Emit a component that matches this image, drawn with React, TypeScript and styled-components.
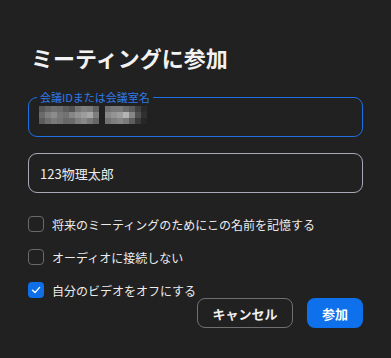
import * as React from 'react'
import styled, { createGlobalStyle } from 'styled-components'

const GlobalStyle = createGlobalStyle`
  html, body {
    margin: 0;
    padding: 0;
    background: #212121;
  }
  body {
    font-family: "Noto Sans CJK JP", "Noto Sans", sans-serif;
    -webkit-font-smoothing: antialiased;
  }
`

// blurred meeting id — gray levels per mosaic block
const mosaic: number[][] = [
  [0x58, 0x66, 0x70, 0x6c, 0x5e, 0x54, 0x74, 0x80, 0x7c, 0x62, 0, 0x70, 0x78, 0x7a, 0x6a, 0x5c, 0x40, 0x2a],
  [0x6a, 0x80, 0x8c, 0x78, 0x72, 0x86, 0x92, 0x9c, 0xa8, 0x7e, 0, 0x88, 0x94, 0x9e, 0xb4, 0x86, 0x50, 0x30],
  [0x5c, 0x6e, 0x7a, 0x74, 0x68, 0x6a, 0x7e, 0x88, 0x78, 0x66, 0, 0x72, 0x7e, 0x86, 0x7a, 0x5e, 0x3a, 0x26],
]

function Mosaic() {
  return (
    <svg width="108" height="18" viewBox="0 0 108 18">
      {mosaic.map((row, r) =>
        row.map((v, c) =>
          v ? (
            <rect
              key={`${r}-${c}`}
              x={c * 6}
              y={r * 6}
              width="6"
              height="6"
              fill={`rgb(${v},${v},${v})`}
            />
          ) : null
        )
      )}
    </svg>
  )
}

function Check({ checked, label }: { checked?: boolean; label: string }) {
  return (
    <CheckRow>
      <Box $checked={checked}>
        {checked && (
          <svg width="10" height="10" viewBox="0 0 10 10">
            <path d="M1.5 5.2 L4 7.6 L8.6 2.4" fill="none" stroke="#fff" strokeWidth="1.4" strokeLinecap="round" strokeLinejoin="round" />
          </svg>
        )}
      </Box>
      <CheckLabel>{label}</CheckLabel>
    </CheckRow>
  )
}

export default function App() {
  return (
    <>
      <GlobalStyle />
      <Dialog>
        <Title>ミーティングに参加</Title>
        <IdField>
          <FloatLabel>会議IDまたは会議室名</FloatLabel>
          <Mosaic />
        </IdField>
        <NameField>123物理太郎</NameField>
        <CheckList>
          <Check label="将来のミーティングのためにこの名前を記憶する" />
          <Check label="オーディオに接続しない" />
          <Check checked label="自分のビデオをオフにする" />
        </CheckList>
        <Actions>
          <CancelButton>キャンセル</CancelButton>
          <JoinButton>参加</JoinButton>
        </Actions>
      </Dialog>
    </>
  )
}

const Dialog = styled.div`
  box-sizing: border-box;
  width: 391px;
  height: 358px;
  padding: 42px 28px 0 28px;
  display: flex;
  flex-direction: column;
  background: #212121;
`

const Title = styled.h1`
  margin: 0 0 0 3px;
  font-size: 22px;
  line-height: 30px;
  font-weight: 700;
  color: #f2f2f2;
`

const IdField = styled.div`
  position: relative;
  box-sizing: border-box;
  margin-top: 25px;
  height: 40px;
  border: 1px solid #1d6fe3;
  border-radius: 9px;
  padding: 8px 10px 0;
  display: flex;
  align-items: flex-start;
`

const FloatLabel = styled.span`
  position: absolute;
  top: -8px;
  left: 8px;
  padding: 0 3px;
  background: #212121;
  font-size: 11px;
  line-height: 14px;
  color: #2f7ae8;
`

const NameField = styled.div`
  box-sizing: border-box;
  margin-top: 16px;
  height: 40px;
  border: 1px solid #a9a8b9;
  border-radius: 9px;
  padding: 0 11px;
  display: flex;
  align-items: center;
  font-size: 13px;
  color: #ececec;
`

const CheckList = styled.div`
  margin-top: 23px;
  display: flex;
  flex-direction: column;
  gap: 17px;
`

const CheckRow = styled.div`
  display: flex;
  align-items: center;
  height: 16px;
`

const Box = styled.span<{ $checked?: boolean }>`
  box-sizing: border-box;
  width: 16px;
  height: 16px;
  border-radius: 4px;
  border: ${(p) => (p.$checked ? 'none' : '1.5px solid #696969')};
  background: ${(p) => (p.$checked ? '#0e6fe8' : 'transparent')};
  display: flex;
  align-items: center;
  justify-content: center;
`

const CheckLabel = styled.span`
  margin-left: 8px;
  font-size: 12px;
  color: #ececec;
  white-space: nowrap;
`

const Actions = styled.div`
  display: flex;
  justify-content: flex-end;
  gap: 14px;
`

const CancelButton = styled.button`
  box-sizing: border-box;
  width: 96px;
  height: 30px;
  border: 1px solid #707070;
  border-radius: 8px;
  background: transparent;
  color: #f0f0f0;
  font-family: inherit;
  font-size: 13px;
  font-weight: 700;
  padding: 0;
`

const JoinButton = styled.button`
  box-sizing: border-box;
  width: 56px;
  height: 30px;
  border: none;
  border-radius: 8px;
  background: #0e71eb;
  color: #ffffff;
  font-family: inherit;
  font-size: 13px;
  font-weight: 700;
  padding: 0;
`
